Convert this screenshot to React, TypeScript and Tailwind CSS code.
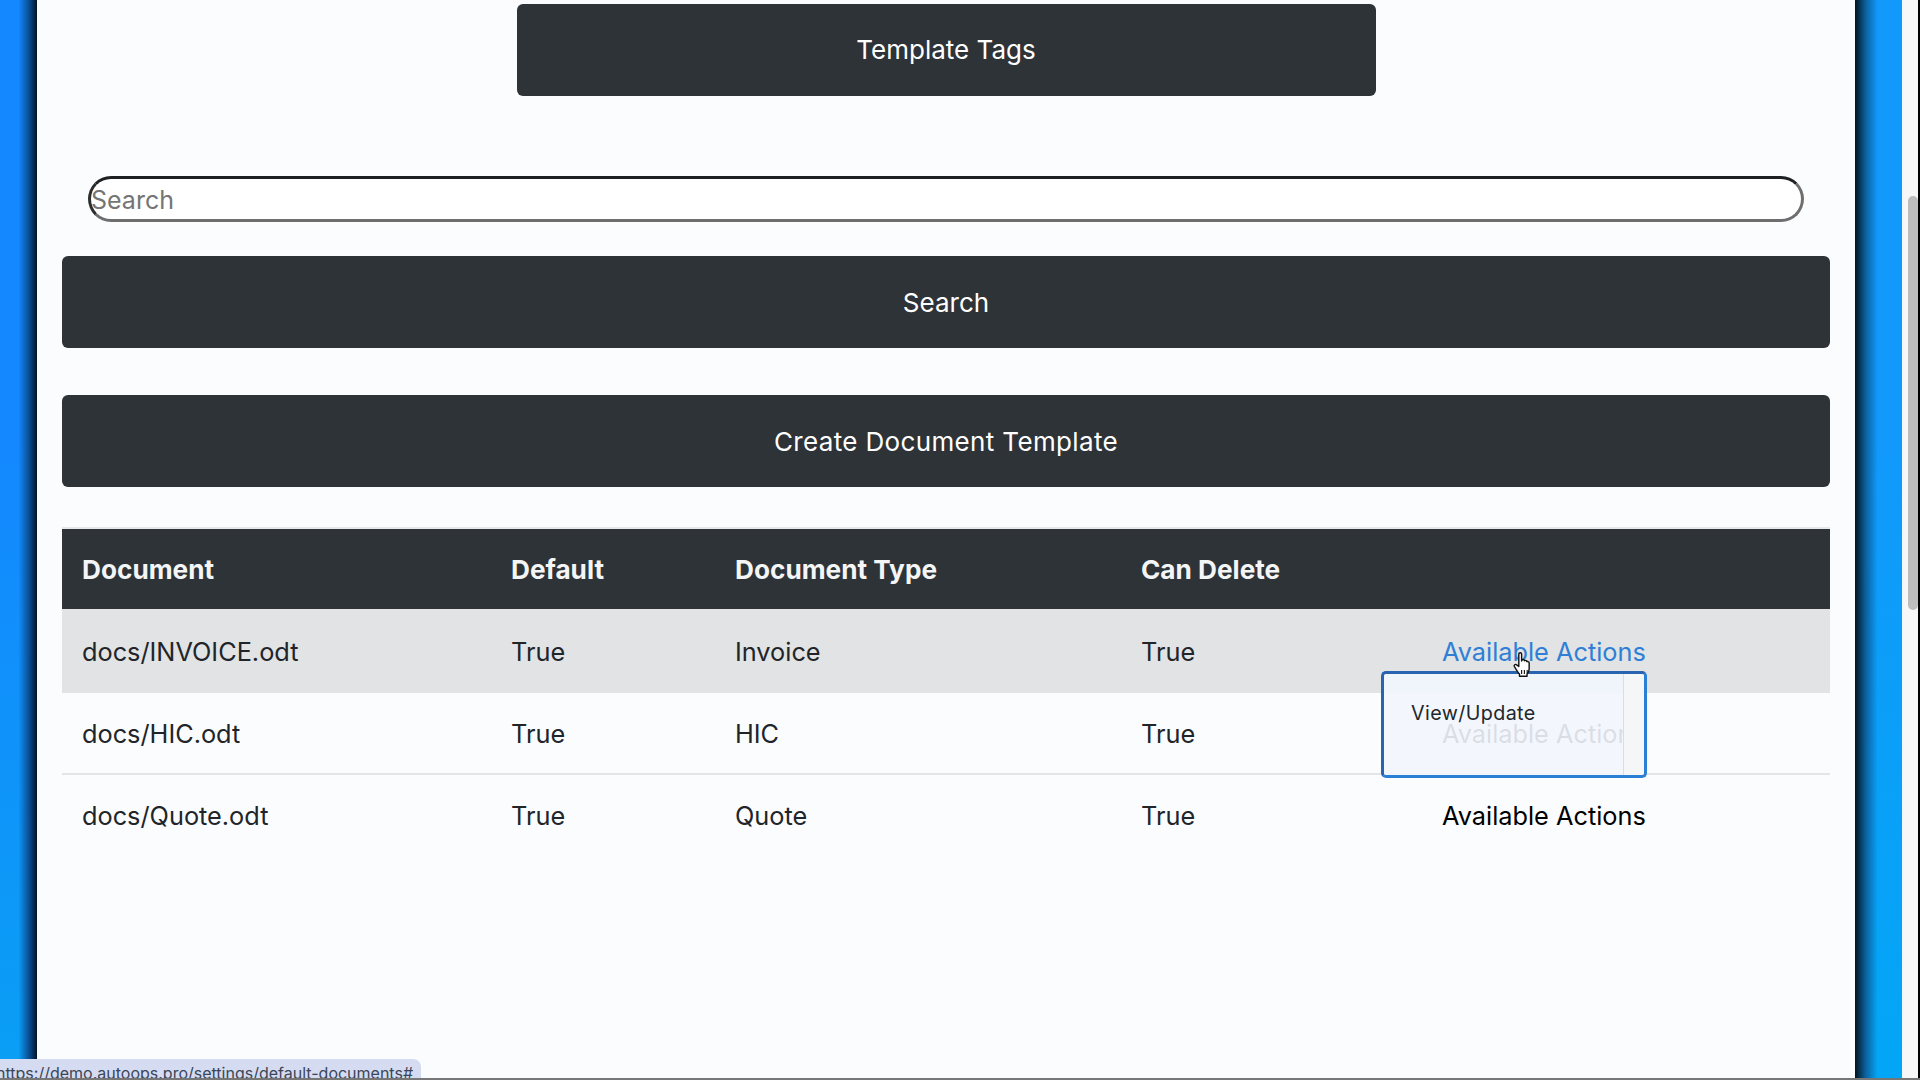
import React from "react";

const rows = [
  { doc: "docs/INVOICE.odt", type: "Invoice", active: true },
  { doc: "docs/HIC.odt", type: "HIC" },
  { doc: "docs/Quote.odt", type: "Quote" },
];

function Bar({ label, className }: { label: string; className: string }) {
  return (
    <button className={`flex h-[92px] items-center justify-center rounded-[6px] bg-[#2e3338] text-[26px] text-white ${className}`}>
      {label}
    </button>
  );
}

function HandCursor() {
  return (
    <svg className="absolute left-[1511px] top-[651px] h-[28px] w-[24px]" viewBox="0 0 16 20">
      <path
        d="M5 2.2c0-1.3 2-1.3 2 0v5l.3-.9c.9-.5 1.700 0 1.700.7l.2-.2c.9-.4 1.600.2 1.600.8.9-.3 1.600.2 1.600 1v4.200c0 1.600-.7 2.700-1.500 3.700v1.500H5.500v-1.500c-1-1-2.300-3.200-3.600-5.400-.6-1.100.6-2 1.500-1.200L5 11z"
        fill="#fff"
        stroke="#111"
        strokeWidth="1"
        strokeLinejoin="round"
      />
      <path d="M7 13.500v3M9 13.500v3M11 13.500v3" stroke="#111" strokeWidth="0.8" />
    </svg>
  );
}

export default function App() {
  return (
    <div className="relative flex h-screen w-full overflow-hidden font-['Inter','Liberation_Sans',sans-serif] text-[#212529]">
      <div className="w-[37px] shrink-0 bg-[linear-gradient(90deg,transparent_0%,transparent_50%,#0a4f95_78%,#001428_100%),linear-gradient(180deg,#1488ff_0%,#1488ff_40%,#0a9ff5_100%)]" />
      <main className="flex w-[1818px] shrink-0 flex-col bg-[#fbfcfe] px-[25px] pt-[4px]">
        <Bar label="Template Tags" className="mx-auto w-[859px] pb-[1px]" />
        <div className="mt-[80px] px-[26px]">
          <input
            placeholder="Search"
            readOnly
            className="block h-[46px] w-full rounded-full border-[3px] border-t-[#1d1f21] border-l-[#2a2c2e] border-b-[#6e6e6e] border-r-[#6e6e6e] bg-white pl-0 pt-[2px] text-[25px] outline-none placeholder:text-[#757575]"
          />
        </div>
        <Bar label="Search" className="mt-[34px] w-full pt-[1px]" />
        <Bar label="Create Document Template" className="mt-[47px] w-full pt-[1px] tracking-[0.35px]" />
        <div className="mt-[40px] border-t-2 border-[#e6e8ea]">
          <table className="w-full table-fixed text-[25.3px]">
            <colgroup>
              <col className="w-[429px]" />
              <col className="w-[224px]" />
              <col className="w-[406px]" />
              <col className="w-[301px]" />
              <col />
            </colgroup>
            <thead>
              <tr className="h-[80px] bg-[#2e3338] text-left text-[26.2px] font-bold text-[#f4f5f6]">
                <th className="pl-[20px] pt-[1px]">Document</th>
                <th className="pl-[20px] pt-[1px]">Default</th>
                <th className="pl-[20px] pt-[1px]">Document Type</th>
                <th className="pl-[20px] pt-[1px]">Can Delete</th>
                <th />
              </tr>
            </thead>
            <tbody>
              {rows.map((r) => (
                <tr
                  key={r.doc}
                  className={`${r.active ? "h-[84px] bg-[#e2e3e5]" : "h-[81px]"} ${r.doc === "docs/HIC.odt" ? "border-b-2 border-[#e3e5e8]" : ""}`}
                >
                  <td className="pl-[20px] pt-[2px]">{r.doc}</td>
                  <td className="pl-[20px] pt-[2px]">True</td>
                  <td className="pl-[20px] pt-[2px]">{r.type}</td>
                  <td className="pl-[20px] pt-[2px]">True</td>
                  <td className={`pl-[20px] pt-[2px] ${r.active ? "text-[#2f7fd6]" : "text-black"}`}>
                    Available Actions
                  </td>
                </tr>
              ))}
            </tbody>
          </table>
        </div>
      </main>
      <div className="w-[47px] shrink-0 bg-[linear-gradient(90deg,#03121c_0%,#0b5f9b_22%,transparent_48%,transparent_100%),linear-gradient(180deg,#1199fb_0%,#1199fb_40%,#03a6f6_100%)]" />
      <div className="relative w-[18px] shrink-0 border-l-2 border-[#f0f8ff] bg-[#f7f7f7]">
        <div className="absolute right-[2px] top-[196px] h-[414px] w-[10px] rounded-full bg-[#bdbdbd]" />
        <div className="absolute right-0 top-0 h-full w-[2px] bg-black" />
      </div>

      <div className="absolute left-[1381px] top-[671px] flex h-[107px] w-[266px] overflow-hidden rounded-[5px] border-[3px] border-t-[#2a63b0] border-l-[#2a63b0] border-r-[#2b80d5] border-b-[#2b80d5]">
        <div className="flex-1 bg-[#f2f6fd]/90 pl-[27px] pt-[24px] text-[19.7px] leading-[30px] tracking-[0.4px] text-[#22262b]">
          View/Update
        </div>
        <div className="w-[21px] border-l border-[#dcdde0] bg-[#f5f6f8]" />
      </div>
      <HandCursor />

      <div className="absolute bottom-0 left-0 flex h-[21px] w-[421px] items-start overflow-hidden rounded-tr-[8px] bg-[#d5dcf2]">
        <span className="ml-[-4px] whitespace-nowrap pt-[2px] text-[16px] leading-[24px] text-[#3a4658]">
          https://demo.autoops.pro/settings/default-documents#
        </span>
      </div>
      <div className="absolute bottom-0 left-0 h-[2px] w-full bg-[#777]" />
    </div>
  );
}
